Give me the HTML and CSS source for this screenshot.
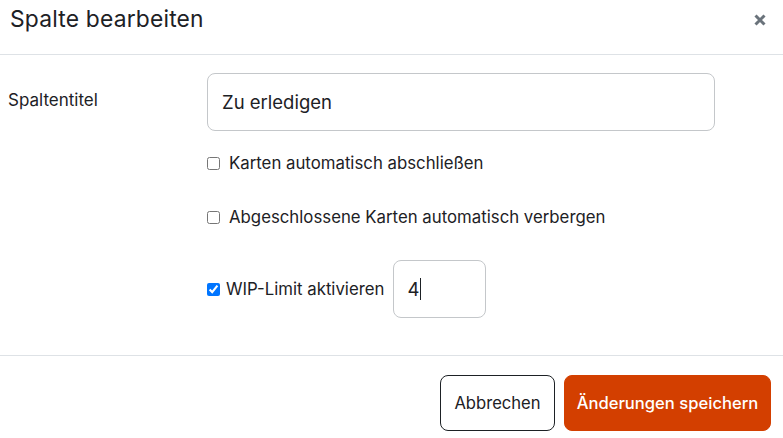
FILE: index.html
```html
<!DOCTYPE html>
<html lang="de">
<head>
<meta charset="utf-8">
<title>Spalte bearbeiten</title>
<link rel="stylesheet" href="styles.css">
</head>
<body>
<div class="modal">
  <div class="modal-header">
    <h2 class="modal-title">Spalte bearbeiten</h2>
    <button class="close" aria-label="Schließen">
      <svg width="12" height="12" viewBox="0 0 12 12"><path d="M1.5 1.5 L10.5 10.5 M10.5 1.5 L1.5 10.5" stroke="#6a737b" stroke-width="3" stroke-linecap="butt"/></svg>
    </button>
  </div>
  <div class="modal-body">
    <div class="form-row">
      <label class="form-label">Spaltentitel</label>
      <div class="form-field">
        <div class="text-input">Zu erledigen</div>
      </div>
    </div>
    <div class="check-row check-first">
      <input type="checkbox" class="cb">
      <span class="cb-label">Karten automatisch abschließen</span>
    </div>
    <div class="check-row check-second">
      <input type="checkbox" class="cb">
      <span class="cb-label">Abgeschlossene Karten automatisch verbergen</span>
    </div>
    <div class="check-row wip-row">
      <input type="checkbox" class="cb" checked>
      <span class="cb-label wip-label">WIP-Limit aktivieren</span>
      <div class="num-input"><span>4</span><span class="caret"></span></div>
    </div>
  </div>
  <div class="modal-footer">
    <button class="btn btn-secondary">Abbrechen</button>
    <button class="btn btn-primary">Änderungen speichern</button>
  </div>
</div>
</body>
</html>
```
FILE: styles.css
```css
* { box-sizing: border-box; }
html, body { margin: 0; padding: 0; background: #fff; }
body {
  font-family: Inter, "Noto Sans", "Liberation Sans", sans-serif;
  color: #1d2125;
  width: 783px;
  height: 438px;
  overflow: hidden;
}
.modal { width: 783px; }
.modal-header {
  height: 55px;
  border-bottom: 1px solid #dee2e6;
  display: flex;
  justify-content: space-between;
  align-items: flex-start;
  padding: 0 17px 0 10px;
}
.modal-title {
  margin: 0;
  font-size: 22.8px;
  font-weight: 400;
  line-height: 38px;
  letter-spacing: 0.2px;
}
.close {
  border: 0;
  background: none;
  padding: 0;
  margin-top: 14px;
  width: 12px;
  height: 12px;
  display: flex;
}
.modal-body {
  padding: 18px 0 0 8px;
  height: 301px;
  border-bottom: 1px solid #dee2e6;
}
.form-row { display: flex; }
.form-label {
  width: 199px;
  font-size: 17px;
  line-height: 22px;
  padding-top: 16px;
}
.text-input {
  width: 508px;
  height: 58px;
  border: 1px solid #c4c7ca;
  border-radius: 8px;
  padding-left: 14px;
  display: flex;
  align-items: center;
  font-size: 18.5px;
}
.check-row {
  display: flex;
  align-items: center;
  margin-left: 199px;
  font-size: 16.8px;
}
.check-first { margin-top: 21px; height: 22px; }
.check-second { margin-top: 32px; height: 22px; }
.wip-row { margin-top: 32px; }
.cb {
  margin: 0;
  width: 13px;
  height: 13px;
}
.cb-label { margin-left: 9px; line-height: 22px; }
.wip-label { margin-left: 6px; }
.num-input {
  margin-left: 9px;
  width: 93px;
  height: 58px;
  border: 1px solid #c4c7ca;
  border-radius: 8px;
  padding-left: 13px;
  display: flex;
  align-items: center;
  font-size: 18.5px;
}
.caret {
  display: inline-block;
  width: 1px;
  height: 22px;
  background: #1d2125;
  margin-left: 1px;
}
.modal-footer {
  display: flex;
  justify-content: flex-end;
  gap: 9px;
  padding: 19px 12px 0 0;
}
.btn {
  font-family: Inter, "Noto Sans", "Liberation Sans", sans-serif;
  font-size: 16.6px;
  height: 56px;
  border-radius: 8px;
  padding: 0 10px;
  cursor: pointer;
}
.btn-secondary {
  background: #fff;
  color: #1d2125;
  border: 1px solid #1d2125;
  width: 115px;
}
.btn-primary {
  background: #d33f00;
  color: #fff;
  border: 1px solid #d33f00;
  width: 207px;
  font-weight: 500;
}
```
